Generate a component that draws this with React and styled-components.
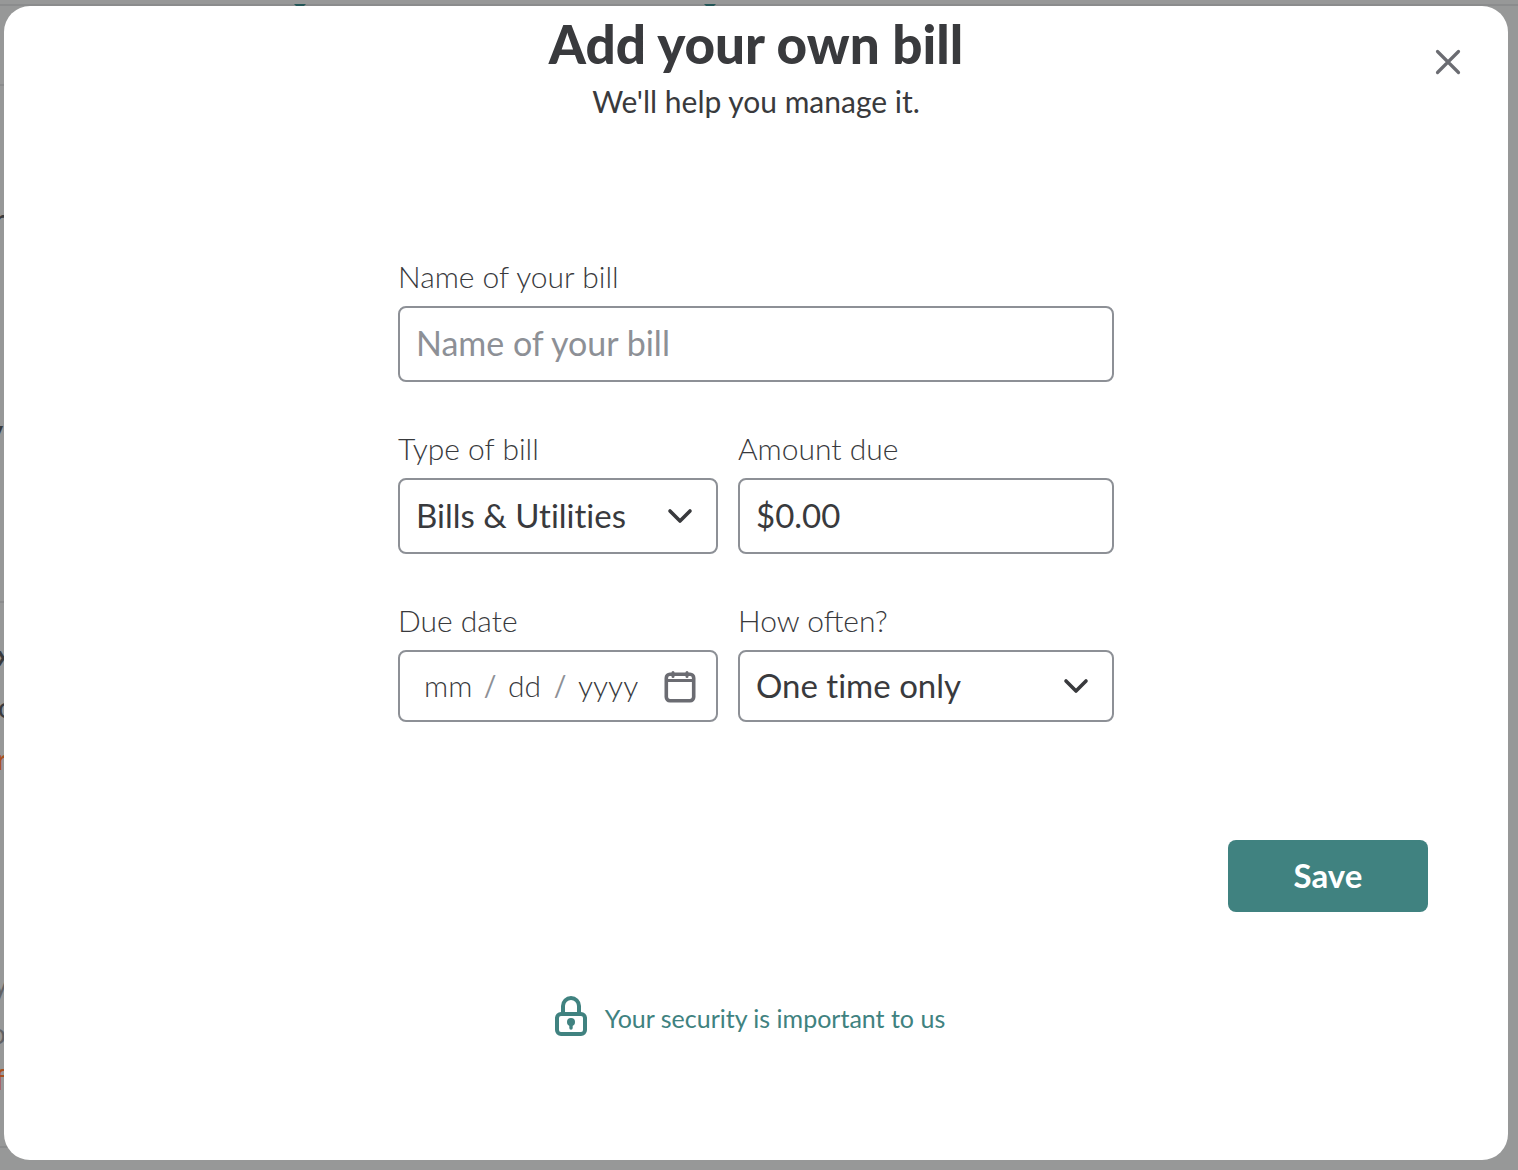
import React from "react";
import styled, { createGlobalStyle } from "styled-components";

const ink = "#393a3d";
const line = "#8d9096";
const teal = "#408280";

const GlobalStyle = createGlobalStyle`
  *, *::before, *::after { box-sizing: border-box; }
  body { margin: 0; background: #979898; }
  body, input, select, button { font-family: Lato, "Open Sans", sans-serif; }
`;

const Screen = styled.div`
  position: relative;
  display: flex;
  min-height: 100vh;
  padding: 6px 10px 10px 4px;
  overflow: hidden;
`;

/* The dimmed page that shows round the edges of the dialog */
const Backdrop = styled.div`
  position: absolute;
  inset: 0;
  color: ${ink};
  user-select: none;
`;

const Rule = styled.div`
  position: absolute;
  left: 0;
  top: ${(p) => p.$top}px;
  width: ${(p) => p.$width || "100%"};
  height: 2px;
  background: #8b8c8d;
`;

const Caret = styled.i`
  position: absolute;
  top: 4px;
  left: ${(p) => p.$left}px;
  border: 6px solid transparent;
  border-top: 6px solid #235556;
  border-bottom: 0;
`;

const Glimpse = styled.span`
  position: absolute;
  top: ${(p) => p.$top}px;
  right: calc(100% - ${(p) => p.$end}px);
  line-height: 32px;
  font-size: ${(p) => p.$size || 28}px;
  font-weight: ${(p) => (p.$bold ? 700 : 400)};
  color: ${(p) => p.$color || ink};
`;

const Dialog = styled.main`
  position: relative;
  flex: 1;
  display: flex;
  flex-direction: column;
  padding: 10px 80px 124px;
  border-radius: 26px;
  background: #fff;
  color: ${ink};
`;

const CloseButton = styled.button`
  position: absolute;
  top: 36px;
  right: 40px;
  display: grid;
  place-items: center;
  width: 40px;
  height: 40px;
  padding: 0;
  border: 0;
  background: none;
  color: #6b6c72;
  cursor: pointer;
`;

const Heading = styled.header`
  text-align: center;
`;

const Title = styled.h1`
  margin: 0;
  font-size: 53px;
  line-height: 56px;
  font-weight: 900;
`;

const Subtitle = styled.p`
  margin: 10px 0 0;
  font-size: 30px;
  line-height: 38px;
`;

const Form = styled.form`
  display: flex;
  flex-direction: column;
  margin-top: 138px;
`;

const Fields = styled.div`
  display: grid;
  grid-template-columns: 320fr 376fr;
  gap: 48px 20px;
  width: 100%;
  max-width: 716px;
  margin: 0 auto;
`;

const Field = styled.div`
  display: flex;
  flex-direction: column;
  gap: 12px;
  min-width: 0;
  grid-column: ${(p) => (p.$wide ? "1 / -1" : "auto")};
`;

const Label = styled.label`
  font-size: 30px;
  line-height: 36px;
  font-weight: 300;
`;

const Control = styled.div`
  position: relative;
  display: flex;
  align-items: center;
  height: ${(p) => (p.$short ? 72 : 76)}px;
  border: 2px solid ${line};
  border-radius: 8px;
  background: #fff;
`;

const TextInput = styled.input`
  width: 100%;
  height: 100%;
  padding: 0 16px 2px;
  border: 0;
  outline: 0;
  background: none;
  color: ${ink};
  font-size: 33px;
  &::placeholder { color: #8d9096; opacity: 1; font-size: 34px; }
`;

const Select = styled.select`
  appearance: none;
  width: 100%;
  height: 100%;
  padding: 0 64px 2px 16px;
  border: 0;
  outline: 0;
  background: none;
  color: ${ink};
  font-size: 33px;
  font-variant-ligatures: none;
`;

const Chevron = styled.svg`
  position: absolute;
  right: 22px;
  top: 50%;
  margin-top: -14px;
  pointer-events: none;
`;

const DateParts = styled.div`
  display: flex;
  align-items: center;
  flex: 1;
  padding: 0 0 2px 24px;
`;

const DateInput = styled.input`
  width: ${(p) => p.$width}px;
  padding: 0;
  border: 0;
  outline: 0;
  background: none;
  color: ${ink};
  font-size: 30px;
  font-weight: 300;
  line-height: 36px;
  &::placeholder { color: ${ink}; opacity: 1; }
`;

const Slash = styled.span`
  width: 36px;
  text-align: center;
  color: ${line};
  font-size: 28px;
  line-height: 36px;
`;

const CalendarButton = styled.button`
  display: grid;
  place-items: center;
  width: 40px;
  height: 40px;
  margin-right: 16px;
  padding: 0;
  border: 0;
  background: none;
  cursor: pointer;
`;

const SaveButton = styled.button`
  align-self: flex-end;
  width: 200px;
  height: 72px;
  margin-top: 118px;
  padding: 0 0 2px;
  border: 0;
  border-radius: 8px;
  background: ${teal};
  color: #fff;
  font-size: 33px;
  font-weight: 700;
  cursor: pointer;
`;

const SecurityLink = styled.a`
  display: flex;
  align-items: center;
  align-self: center;
  gap: 18px;
  margin-top: 84px;
  padding-right: 12px;
  color: ${teal};
  font-size: 25px;
  line-height: 32px;
  text-decoration: none;
`;

const SecurityText = styled.span`
  padding-top: 4px;
`;

function Down() {
  return (
    <Chevron width="28" height="28" viewBox="0 0 28 28" fill="none" stroke={ink} strokeWidth="3.6" strokeLinecap="round" strokeLinejoin="round" aria-hidden="true">
      <path d="M4 9l10 10L24 9" />
    </Chevron>
  );
}

function PageBehind() {
  return (
    <Backdrop aria-hidden="true">
      <Rule $top={4} />
      <Caret $left={294} />
      <Caret $left={704} />
      <Rule $top={84} $width="4px" />
      <Glimpse $top={203} $end={5}>r</Glimpse>
      <Glimpse $top={414} $end={3} $bold>y</Glimpse>
      <Glimpse $top={473} $end={12} $size={24}>r</Glimpse>
      <Rule $top={601} $width="4px" />
      <Glimpse $top={639} $end={11} $bold>x</Glimpse>
      <Glimpse $top={691} $end={14}>o</Glimpse>
      <Glimpse $top={743} $end={7} $color="#a9501f">r</Glimpse>
      <Glimpse $top={968} $end={8} $color="#616265">y</Glimpse>
      <Glimpse $top={1017} $end={6} $color="#616265">o</Glimpse>
      <Glimpse $top={1063} $end={5} $color="#a9501f">f</Glimpse>
      <Rule $top={1146} $width="12px" />
    </Backdrop>
  );
}

export default function App() {
  return (
    <>
      <GlobalStyle />
      <Screen>
        <PageBehind />
        <Dialog role="dialog" aria-labelledby="title">
          <CloseButton type="button" aria-label="Close">
            <svg width="28" height="28" viewBox="0 0 28 28" fill="none" stroke="currentColor" strokeWidth="3.2" strokeLinecap="round">
              <path d="M3.5 3.5l21 21M24.5 3.5l-21 21" />
            </svg>
          </CloseButton>

          <Heading>
            <Title id="title">Add your own bill</Title>
            <Subtitle>We'll help you manage it.</Subtitle>
          </Heading>

          <Form onSubmit={(e) => e.preventDefault()}>
            <Fields>
              <Field $wide>
                <Label htmlFor="name">Name of your bill</Label>
                <Control>
                  <TextInput id="name" placeholder="Name of your bill" />
                </Control>
              </Field>

              <Field>
                <Label htmlFor="type">Type of bill</Label>
                <Control>
                  <Select id="type">
                    <option>Bills &amp; Utilities</option>
                  </Select>
                  <Down />
                </Control>
              </Field>
              <Field>
                <Label htmlFor="amount">Amount due</Label>
                <Control>
                  <TextInput id="amount" defaultValue="$0.00" />
                </Control>
              </Field>

              <Field>
                <Label htmlFor="month">Due date</Label>
                <Control $short>
                  <DateParts>
                    <DateInput id="month" $width={48} placeholder="mm" />
                    <Slash>/</Slash>
                    <DateInput aria-label="Day" $width={34} placeholder="dd" />
                    <Slash>/</Slash>
                    <DateInput aria-label="Year" $width={60} placeholder="yyyy" />
                  </DateParts>
                  <CalendarButton type="button" aria-label="Choose a date">
                    <svg width="32" height="34" viewBox="0 0 32 34" fill="none" stroke="#6b6c72" strokeWidth="3.6" strokeLinecap="round">
                      <rect x="2.3" y="5.3" width="27.4" height="26.4" rx="3.6" />
                      <path d="M3 11.5h26" strokeWidth="2.8" />
                      <path d="M9 3.4v4M23 3.4v4" strokeWidth="3" />
                    </svg>
                  </CalendarButton>
                </Control>
              </Field>
              <Field>
                <Label htmlFor="often">How often?</Label>
                <Control $short>
                  <Select id="often">
                    <option>One time only</option>
                  </Select>
                  <Down />
                </Control>
              </Field>
            </Fields>

            <SaveButton type="submit">Save</SaveButton>
          </Form>

          <SecurityLink href="#security">
            <svg width="32" height="40" viewBox="0 0 32 40" fill="none" stroke={teal} strokeWidth="4">
              <rect x="2" y="18" width="28" height="20" rx="4" />
              <path d="M8 18v-8a8 8 0 0 1 16 0v8" />
              <circle cx="16" cy="26" r="4" fill={teal} stroke="none" />
              <path d="M16 27v5" strokeWidth="3.4" strokeLinecap="round" />
            </svg>
            <SecurityText>Your security is important to us</SecurityText>
          </SecurityLink>
        </Dialog>
      </Screen>
    </>
  );
}
